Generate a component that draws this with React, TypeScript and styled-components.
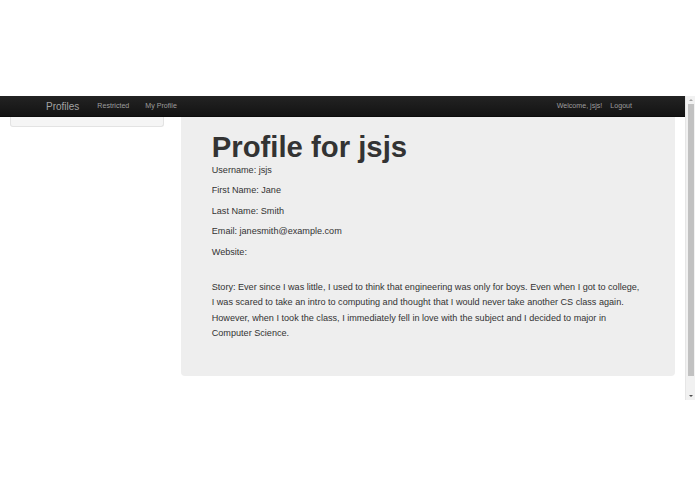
import React from 'react'
import styled, { createGlobalStyle } from 'styled-components'

const GlobalStyle = createGlobalStyle`
    html, body {
        margin: 0;
        padding: 0;
        background: #ffffff;
        font-family: "Liberation Sans", Arial, sans-serif;
    }
`;

const Page = styled.div`
    width: 695px;
    height: 494px;
    padding-top: 96px;
    box-sizing: border-box;
    overflow: hidden;
`;

const Viewport = styled.div`
    display: flex;
    width: 695px;
    height: 304px;
`;

const Content = styled.div`
    flex: 1;
    display: flex;
    flex-direction: column;
    overflow: hidden;
    background: #ffffff;
`;

const Navbar = styled.div`
    height: 20px;
    display: flex;
    align-items: center;
    padding: 0 53px 0 46px;
    background: linear-gradient(to bottom, #232323, #131313);
    border-bottom: 1px solid #0c0c0c;
`;

const Brand = styled.a`
    font-size: 10px;
    color: #a3a3a3;
    margin-right: 18px;
    text-decoration: none;
`;

const NavLinks = styled.div`
    display: flex;
    gap: 16px;
    flex: 1;
`;

const NavRight = styled.div`
    display: flex;
    gap: 8px;
`;

const NavLink = styled.a`
    font-size: 7.1px;
    color: #9d9d9d;
    text-decoration: none;
`;

const Row = styled.div`
    display: flex;
    align-items: flex-start;
    gap: 17px;
    padding: 0 10px;
`;

const Well = styled.div`
    width: 154px;
    height: 10px;
    box-sizing: border-box;
    background: #f5f5f5;
    border: 1px solid #e3e3e3;
    border-top: none;
    border-radius: 0 0 3px 3px;
`;

const Hero = styled.div`
    width: 495px;
    box-sizing: border-box;
    padding: 15px 31px 29px;
    background: #eeeeee;
    border-radius: 0 0 4px 4px;
    color: #333333;
`;

const Title = styled.h1`
    margin: 0 0 2px;
    font-size: 29.3px;
    line-height: 29px;
    font-weight: bold;
    color: #333333;
`;

const Field = styled.p<{ $gap?: number }>`
    margin: ${p => p.$gap ?? 0}px 0 5px;
    font-size: 9.1px;
    line-height: 15.4px;
`;

const Scrollbar = styled.div`
    width: 9px;
    display: flex;
    flex-direction: column;
    align-items: center;
    background: #f1f1f1;
    border-left: 1px solid #e6e6e6;
`;

const Arrow = styled.div<{ $down?: boolean }>`
    height: 8px;
    width: 100%;
    display: flex;
    align-items: center;
    justify-content: center;
    &::after {
        content: "";
        border-left: 2px solid transparent;
        border-right: 2px solid transparent;
        ${p => p.$down ? 'border-top: 2px solid #505050;' : 'border-bottom: 2px solid #a3a3a3;'}
    }
`;

const Thumb = styled.div`
    width: 6px;
    height: 272px;
    background: #c1c1c1;
`;

const Track = styled.div`
    flex: 1;
`;

const App: React.FC = () => {
    return (
        <Page>
            <GlobalStyle />
            <Viewport>
                <Content>
                    <Navbar>
                        <Brand>Profiles</Brand>
                        <NavLinks>
                            <NavLink>Restricted</NavLink>
                            <NavLink>My Profile</NavLink>
                        </NavLinks>
                        <NavRight>
                            <NavLink>Welcome, jsjs!</NavLink>
                            <NavLink>Logout</NavLink>
                        </NavRight>
                    </Navbar>
                    <Row>
                        <Well />
                        <Hero>
                            <Title>Profile for jsjs</Title>
                            <Field>Username: jsjs</Field>
                            <Field>First Name: Jane</Field>
                            <Field>Last Name: Smith</Field>
                            <Field>Email: janesmith@example.com</Field>
                            <Field>Website: </Field>
                            <Field $gap={20}>
                                Story: Ever since I was little, I used to think that engineering was only for boys. Even when I got to college,<br />
                                I was scared to take an intro to computing and thought that I would never take another CS class again.<br />
                                However, when I took the class, I immediately fell in love with the subject and I decided to major in<br />
                                Computer Science.
                            </Field>
                        </Hero>
                    </Row>
                </Content>
                <Scrollbar>
                    <Arrow />
                    <Thumb />
                    <Track />
                    <Arrow $down />
                </Scrollbar>
            </Viewport>
        </Page>
    )
}

export default App
